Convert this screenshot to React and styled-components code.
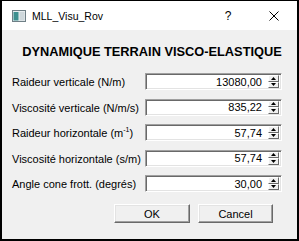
import React from 'react';
import styled, { createGlobalStyle } from 'styled-components';

const GlobalStyle = createGlobalStyle`
  html, body {
    margin: 0;
    padding: 0;
    background: #000;
  }
  body {
    font-family: "Liberation Sans", Arial, sans-serif;
    color: #000;
  }
`;

const Window = styled.div`
  box-sizing: border-box;
  width: 299px;
  height: 241px;
  border: 2px solid #000;
  border-top-width: 1px;
  background: #f0f0f0;
  display: flex;
  flex-direction: column;
`;

const TitleBar = styled.div`
  height: 29px;
  flex: none;
  background: #fff;
  display: flex;
  align-items: center;
  padding-left: 10px;
`;

const AppIcon = styled.svg`
  width: 14px;
  height: 12px;
  flex: none;
`;

const Title = styled.span`
  margin-left: 6px;
  font-size: 10.5px;
  flex: 1;
`;

const CaptionButton = styled.div`
  width: 46px;
  height: 29px;
  display: flex;
  align-items: center;
  justify-content: center;
  font-size: 12px;
`;

const Body = styled.div`
  flex: 1;
  padding: 0 15px 0 10px;
  display: flex;
  flex-direction: column;
`;

const Heading = styled.div`
  margin-top: 14px;
  line-height: 16px;
  font-size: 12.8px;
  font-weight: bold;
  text-align: center;
  padding-left: 10px;
  white-space: nowrap;
`;

const Form = styled.div`
  margin-top: 13px;
  display: grid;
  grid-template-columns: 1fr 137px;
  grid-auto-rows: 17px;
  row-gap: 8.5px;
  align-items: center;
`;

const Label = styled.div`
  font-size: 11px;
  white-space: nowrap;
  padding-top: 1px;

  & sup {
    font-size: 7px;
    line-height: 0;
  }
`;

const SpinBox = styled.div`
  box-sizing: border-box;
  height: 17px;
  display: flex;
  align-items: center;
  background: #fff;
  border-style: solid;
  border-width: 1px;
  border-color: #a0a0a0 #fff #fff #a0a0a0;
  box-shadow: inset 1px 1px 0 #696969, inset -1px -1px 0 #e3e3e3;
`;

const Value = styled.span`
  flex: 1;
  text-align: right;
  font-size: 11px;
  padding-right: 6px;
`;

const Arrows = styled.div`
  display: flex;
  flex-direction: column;
  margin-right: 2px;
`;

const ArrowButton = styled.div`
  box-sizing: border-box;
  width: 11px;
  height: 6.5px;
  background: #f0f0f0;
  border-style: solid;
  border-width: 1px;
  border-color: #fff #696969 #696969 #fff;
  display: flex;
  align-items: center;
  justify-content: center;

  & svg {
    width: 5px;
    height: 3px;
    transform: ${({ down }) => (down ? 'rotate(180deg)' : 'none')};
  }
`;

const Actions = styled.div`
  margin-top: 12px;
  display: flex;
  justify-content: flex-end;
  gap: 8px;
  padding-right: 9px;
`;

const Button = styled.div`
  box-sizing: border-box;
  width: ${({ w }) => w}px;
  height: 19px;
  display: flex;
  align-items: center;
  justify-content: center;
  font-size: 11px;
  background: #f0f0f0;
  border-style: solid;
  border-width: 1px;
  border-color: #fff #696969 #696969 #fff;
  box-shadow: inset -1px -1px 0 #a0a0a0, inset 1px 1px 0 #e3e3e3;
`;

const Triangle = () => (
  <svg viewBox="0 0 5 3">
    <path d="M2.5 0 L5 3 L0 3 Z" fill="#000" />
  </svg>
);

const Spin = ({ value }) => (
  <SpinBox>
    <Value>{value}</Value>
    <Arrows>
      <ArrowButton>
        <Triangle />
      </ArrowButton>
      <ArrowButton down>
        <Triangle />
      </ArrowButton>
    </Arrows>
  </SpinBox>
);

const fields = [
  { label: 'Raideur verticale (N/m)', value: '13080,00' },
  { label: 'Viscosité verticale (N/m/s)', value: '835,22' },
  {
    label: (
      <>
        Raideur horizontale (m<sup>-1</sup>)
      </>
    ),
    value: '57,74',
  },
  { label: 'Viscosité horizontale (s/m)', value: '57,74' },
  { label: 'Angle cone frott. (degrés)', value: '30,00' },
];

const App = () => (
  <>
    <GlobalStyle />
    <Window>
      <TitleBar>
        <AppIcon viewBox="0 0 14 12">
          <rect x="0.5" y="0.5" width="13" height="11" fill="#e8eef0" stroke="#6f7f86" />
          <rect x="1.5" y="2" width="5" height="8.5" fill="#3d8f8f" />
          <rect x="7.5" y="2" width="5" height="8.5" fill="#cfd8dc" />
        </AppIcon>
        <Title>MLL_Visu_Rov</Title>
        <CaptionButton>?</CaptionButton>
        <CaptionButton>
          <svg width="10" height="10" viewBox="0 0 10 10">
            <path d="M0.5 0.5 L9.5 9.5 M9.5 0.5 L0.5 9.5" stroke="#000" strokeWidth="1" />
          </svg>
        </CaptionButton>
      </TitleBar>
      <Body>
        <Heading>DYNAMIQUE TERRAIN VISCO-ELASTIQUE</Heading>
        <Form>
          {fields.map((f, i) => (
            <React.Fragment key={i}>
              <Label>{f.label}</Label>
              <Spin value={f.value} />
            </React.Fragment>
          ))}
        </Form>
        <Actions>
          <Button w={76}>OK</Button>
          <Button w={75}>Cancel</Button>
        </Actions>
      </Body>
    </Window>
  </>
);

export default App;
